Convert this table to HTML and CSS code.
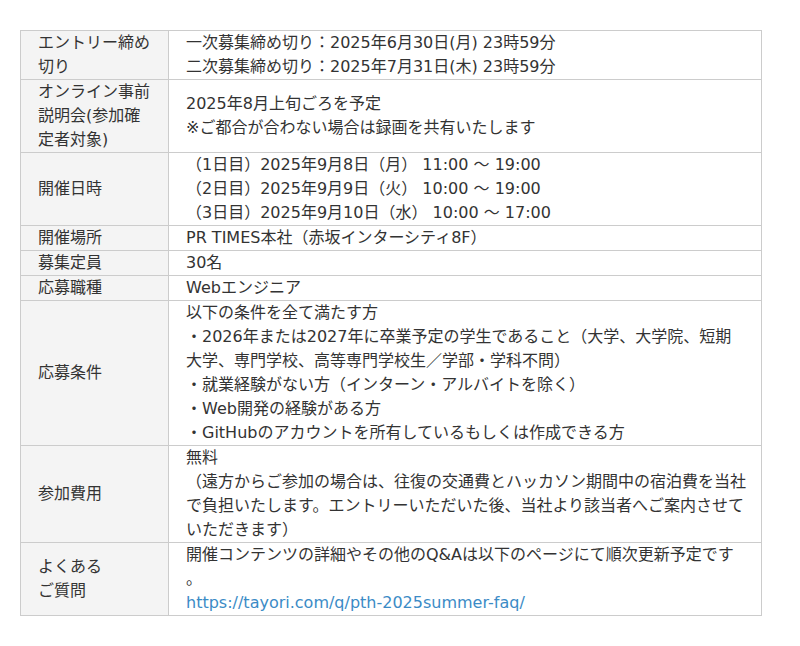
FILE: index.html
```html
<!DOCTYPE html>
<html lang="ja">
<head>
<meta charset="utf-8">
<link rel="stylesheet" href="styles.css">
</head>
<body>
<div class="page">
<table class="info">
<tbody>
<tr><th>エントリー締め切り</th><td>一次募集締め切り：2025年6月30日(月) 23時59分<br>二次募集締め切り：2025年7月31日(木) 23時59分</td></tr>
<tr><th>オンライン事前説明会(参加確定者対象)</th><td>2025年8月上旬ごろを予定<br>※ご都合が合わない場合は録画を共有いたします</td></tr>
<tr><th>開催日時</th><td>（1日目）2025年9月8日（月） 11:00 〜 19:00<br>（2日目）2025年9月9日（火） 10:00 〜 19:00<br>（3日目）2025年9月10日（水） 10:00 〜 17:00</td></tr>
<tr><th>開催場所</th><td>PR TIMES本社（赤坂インターシティ8F）</td></tr>
<tr><th>募集定員</th><td>30名</td></tr>
<tr><th>応募職種</th><td>Webエンジニア</td></tr>
<tr><th>応募条件</th><td>以下の条件を全て満たす方<br>・2026年または2027年に卒業予定の学生であること（大学、大学院、短期<br>大学、専門学校、高等専門学校生／学部・学科不問）<br>・就業経験がない方（インターン・アルバイトを除く）<br>・Web開発の経験がある方<br>・GitHubのアカウントを所有しているもしくは作成できる方</td></tr>
<tr><th>参加費用</th><td>無料<br>（遠方からご参加の場合は、往復の交通費とハッカソン期間中の宿泊費を当社で負担いたします。エントリーいただいた後、当社より該当者へご案内させていただきます）</td></tr>
<tr><th>よくある<br>ご質問</th><td>開催コンテンツの詳細やその他のQ&amp;Aは以下のページにて順次更新予定です<br>。<br><a class="link" href="#">https://tayori.com/q/pth-2025summer-faq/</a></td></tr>
</tbody>
</table>
</div>
</body>
</html>
```
FILE: styles.css
```css
html, body {
  margin: 0;
  padding: 0;
  background: #ffffff;
}
.page {
  padding: 30px 38px 0 20px;
  font-family: "DejaVu Sans", "Noto Sans CJK JP", sans-serif;
  font-size: 16px;
  line-height: 24px;
  color: #333333;
}
.info {
  width: 742px;
  border-collapse: collapse;
  border: 1px solid #cccccc;
}
.info th,
.info td {
  border: 1px solid #cccccc;
  padding: 0 12px 0 17px;
  vertical-align: middle;
  text-align: left;
  font-weight: normal;
}
.info th {
  width: 118px;
  background: #f4f4f4;
}
.link {
  color: #3b8bc6;
  text-decoration: none;
}
```
